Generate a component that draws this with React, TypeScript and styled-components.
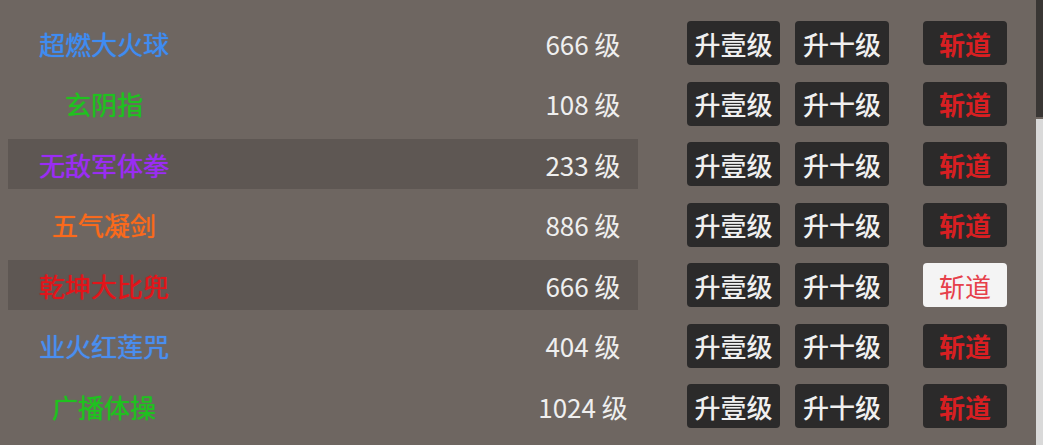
import * as React from 'react';
import styled, { createGlobalStyle } from 'styled-components';

interface ISkill {
    name: string;
    level: number;
    color: string;
    highlight?: boolean;
    active?: boolean;
}

const skills: ISkill[] = [
    { name: '超燃大火球', level: 666, color: '#3f8cf2' },
    { name: '玄阴指', level: 108, color: '#1fc21f' },
    { name: '无敌军体拳', level: 233, color: '#9a2cf5', highlight: true },
    { name: '五气凝剑', level: 886, color: '#fb6a1c' },
    { name: '乾坤大比兜', level: 666, color: '#e3141a', highlight: true, active: true },
    { name: '业火红莲咒', level: 404, color: '#4a8ef0' },
    { name: '广播体操', level: 1024, color: '#1fc21f' },
];

const GlobalStyle = createGlobalStyle`
    html, body {
        background: #6e6661;
    }
    body {
        margin: 8px;
        font-family: "Noto Sans CJK SC", "Noto Sans", sans-serif;
        overflow: hidden;
    }
`;

const List = styled.div`
    padding-top: 5px;
    display: flex;
    flex-direction: column;
`;

const Row = styled.div`
    display: flex;
    align-items: center;
    height: 60.5px;
`;

const Info = styled.div<{ highlight?: boolean }>`
    display: flex;
    align-items: center;
    justify-content: space-between;
    width: 630px;
    height: 50px;
    background: ${p => (p.highlight ? '#5e5753' : 'transparent')};
`;

const Name = styled.div<{ color: string }>`
    width: 192px;
    text-align: center;
    font-size: 26px;
    color: ${p => p.color};
    text-shadow: 0 0 1px ${p => p.color};
    white-space: nowrap;
`;

const Level = styled.div`
    width: 110px;
    text-align: center;
    font-size: 26px;
    color: #efefef;
    white-space: nowrap;
`;

const Actions = styled.div`
    display: flex;
    align-items: center;
    margin-left: 49px;
`;

const Button = styled.button<{ w: number; gap: number }>`
    width: ${p => p.w}px;
    height: 44px;
    margin-left: ${p => p.gap}px;
    padding: 0;
    border: none;
    border-radius: 4px;
    background: #2b2a2a;
    color: #f0f0f0;
    font-family: "Noto Sans CJK SC", sans-serif;
    font-size: 26px;
    font-weight: 500;
    cursor: pointer;
`;

const CutButton = styled(Button)<{ active?: boolean }>`
    background: ${p => (p.active ? '#f4f4f4' : '#2b2a2a')};
    color: ${p => (p.active ? '#e6404a' : '#d81f22')};
    font-weight: ${p => (p.active ? 400 : 700)};
`;

const Scrollbar = styled.div`
    position: fixed;
    top: 0;
    right: 0;
    width: 7px;
    height: 100%;
    display: flex;
    flex-direction: column;
    gap: 2px;
`;

const ScrollTrack = styled.div`
    height: 117px;
    background: #393634;
`;

const ScrollThumb = styled.div`
    flex: 1;
    background: #d9d9d9;
`;

const App: React.FC = () => (
    <>
        <GlobalStyle />
        <List>
            {skills.map((s, idx) => (
                <Row key={idx}>
                    <Info highlight={s.highlight}>
                        <Name color={s.color}>{s.name}</Name>
                        <Level>{s.level} 级</Level>
                    </Info>
                    <Actions>
                        <Button w={93} gap={0}>升壹级</Button>
                        <Button w={94} gap={15}>升十级</Button>
                        <CutButton w={84} gap={34} active={s.active}>
                            斩道
                        </CutButton>
                    </Actions>
                </Row>
            ))}
        </List>
        <Scrollbar>
            <ScrollTrack />
            <ScrollThumb />
        </Scrollbar>
    </>
);

export default App;
